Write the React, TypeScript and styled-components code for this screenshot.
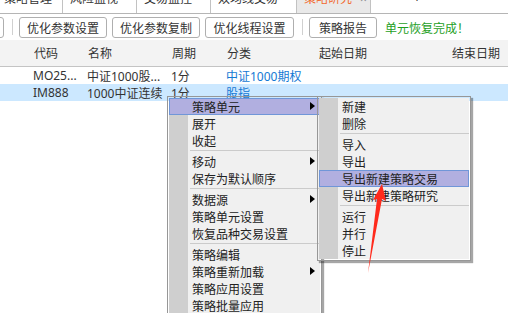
import styled, { createGlobalStyle } from 'styled-components';

const GlobalStyle = createGlobalStyle`
  html, body {
    margin: 0;
    padding: 0;
    background: #fff;
  }
  body {
    font-family: "Noto Sans", "Noto Sans CJK SC", sans-serif;
    font-size: 12px;
    color: #333;
  }
`;

const Page = styled.div`
  position: relative;
  width: 508px;
  height: 313px;
  overflow: hidden;
  background: #fff;
`;

const TabStrip = styled.div`
  display: flex;
  height: 13px;
  border-bottom: 1px solid #b5b5b5;
  overflow: hidden;
`;

const Tab = styled.div<{ $w: number; $active?: boolean }>`
  box-sizing: border-box;
  flex: none;
  width: ${(p) => p.$w}px;
  padding-left: 7px;
  border-right: 1px solid #c2c2c2;
  border-left: ${(p) => (p.$active ? '1px solid #c2c2c2' : 'none')};
  margin-left: ${(p) => (p.$active ? '-1px' : '0')};
  background: ${(p) => (p.$active ? '#e9e9e9' : '#fff')};
  color: ${(p) => (p.$active ? '#f26a2e' : '#333')};
  display: flex;
  line-height: 12px;
  white-space: nowrap;
`;

const TabLabel = styled.span`
  display: block;
  margin-top: -7px;
`;

const TabClose = styled.span`
  display: block;
  margin: -7px 0 0 8px;
  color: #888;
`;

const AddTab = styled.span`
  display: block;
  margin: -9px 0 0 42px;
  font-size: 14px;
  line-height: 14px;
  color: #333;
`;

const Toolbar = styled.div`
  display: flex;
  align-items: center;
  gap: 5px;
  height: 26px;
  background: #fff;
`;

const ToolButton = styled.div<{ $w: number }>`
  box-sizing: border-box;
  flex: none;
  width: ${(p) => p.$w}px;
  height: 21px;
  border: 1px solid #afafaf;
  border-radius: 3px;
  background: #fff;
  display: flex;
  align-items: center;
  justify-content: center;
  font-family: "Noto Sans CJK SC", sans-serif;
  color: #333;
`;

const CutButton = styled(ToolButton)`
  margin-left: -27px;
`;

const ToolSep = styled.div`
  flex: none;
  width: 1px;
  height: 16px;
  margin: 0 1px 0 3px;
  background: #d0d0d0;
`;

const Status = styled.span`
  margin-left: 3px;
  font-family: "Noto Sans CJK SC", sans-serif;
  color: #1ea01e;
`;

const cols = '54px 84px 55px 92px 133px 1fr';

const GridHeader = styled.div`
  display: grid;
  grid-template-columns: ${cols};
  align-items: center;
  height: 26px;
  padding-left: 34px;
  background: #f3f3f3;
  border-bottom: 1px solid #c4c4c4;
`;

const Row = styled.div<{ $selected?: boolean }>`
  display: grid;
  grid-template-columns: ${cols};
  align-items: center;
  height: 17px;
  padding-left: 33px;
  background: ${(p) => (p.$selected ? '#cce8ff' : '#fff')};
`;

const Cell = styled.span<{ $link?: boolean }>`
  white-space: nowrap;
  overflow: hidden;
  color: ${(p) => (p.$link ? '#1479d4' : '#333')};
`;

const Menu = styled.div<{ $left: number; $top: number; $w: number }>`
  position: absolute;
  left: ${(p) => p.$left}px;
  top: ${(p) => p.$top}px;
  width: ${(p) => p.$w}px;
  box-sizing: border-box;
  padding: 1px;
  border: 1px solid #979797;
  background: linear-gradient(90deg, #cfcfcf 0 20px, #f0f0f0 20px);
  background-clip: content-box;
  box-shadow: 2px 2px 1px rgba(0, 0, 0, 0.35);
  font-family: "Noto Sans CJK SC", sans-serif;
  color: #222;
`;

const MenuItem = styled.div<{ $active?: boolean; $sub?: boolean }>`
  position: relative;
  box-sizing: border-box;
  height: 17px;
  line-height: 15px;
  padding-left: 22px;
  border: 1px solid ${(p) => (p.$active ? '#7096d8' : 'transparent')};
  background: ${(p) => (p.$active ? '#b1afe0' : 'transparent')};
  white-space: nowrap;

  &::after {
    content: '';
    display: ${(p) => (p.$sub ? 'block' : 'none')};
    position: absolute;
    right: 4px;
    top: 3px;
    border-left: 5px solid #000;
    border-top: 4px solid transparent;
    border-bottom: 4px solid transparent;
  }
`;

const MenuSep = styled.div`
  margin: 1px 0 2px 21px;
  border-top: 1px solid #cbcbcb;
`;

const Arrow = styled.svg`
  position: absolute;
  left: 0;
  top: 0;
  pointer-events: none;
`;

type Entry = { label: string; sub?: boolean; active?: boolean } | 'sep';

const mainMenu: Entry[] = [
  { label: '策略单元', sub: true, active: true },
  { label: '展开' },
  { label: '收起' },
  'sep',
  { label: '移动', sub: true },
  { label: '保存为默认顺序' },
  'sep',
  { label: '数据源', sub: true },
  { label: '策略单元设置' },
  { label: '恢复品种交易设置' },
  'sep',
  { label: '策略编辑' },
  { label: '策略重新加载', sub: true },
  { label: '策略应用设置' },
  { label: '策略批量应用' },
  { label: '策略批量设置' },
];

const subMenu: Entry[] = [
  { label: '新建' },
  { label: '删除' },
  'sep',
  { label: '导入' },
  { label: '导出' },
  { label: '导出新建策略交易', active: true },
  { label: '导出新建策略研究' },
  'sep',
  { label: '运行' },
  { label: '并行' },
  { label: '停止' },
];

function MenuList({ items }: { items: Entry[] }) {
  return (
    <>
      {items.map((it, i) =>
        it === 'sep' ? (
          <MenuSep key={i} />
        ) : (
          <MenuItem key={i} $active={it.active} $sub={it.sub}>
            {it.label}
          </MenuItem>
        )
      )}
    </>
  );
}

export default function App() {
  return (
    <Page>
      <GlobalStyle />
      <TabStrip>
        <Tab $w={66} style={{ marginLeft: -3 }}>
          <TabLabel>策略管理</TabLabel>
        </Tab>
        <Tab $w={74}>
          <TabLabel>风险监视</TabLabel>
        </Tab>
        <Tab $w={74}>
          <TabLabel>交易监控</TabLabel>
        </Tab>
        <Tab $w={86}>
          <TabLabel>双均线交易</TabLabel>
        </Tab>
        <Tab $w={75} $active>
          <TabLabel>策略研究</TabLabel>
          <TabClose>×</TabClose>
        </Tab>
        <AddTab>+</AddTab>
      </TabStrip>

      <Toolbar>
        <CutButton $w={31} />
        <ToolSep />
        <ToolButton $w={88}>优化参数设置</ToolButton>
        <ToolButton $w={88}>优化参数复制</ToolButton>
        <ToolButton $w={89}>优化线程设置</ToolButton>
        <ToolSep />
        <ToolButton $w={68}>策略报告</ToolButton>
        <Status>单元恢复完成！</Status>
      </Toolbar>

      <GridHeader>
        <Cell>代码</Cell>
        <Cell>名称</Cell>
        <Cell>周期</Cell>
        <Cell>分类</Cell>
        <Cell>起始日期</Cell>
        <Cell>结束日期</Cell>
      </GridHeader>
      <Row>
        <Cell>MO25...</Cell>
        <Cell>中证1000股...</Cell>
        <Cell>1分</Cell>
        <Cell $link>中证1000期权</Cell>
        <Cell />
        <Cell />
      </Row>
      <Row $selected>
        <Cell>IM888</Cell>
        <Cell>1000中证连续</Cell>
        <Cell>1分</Cell>
        <Cell $link>股指</Cell>
        <Cell />
        <Cell />
      </Row>

      <Menu $left={167} $top={96} $w={155}>
        <MenuList items={mainMenu} />
      </Menu>
      <Menu $left={317} $top={96} $w={154}>
        <MenuList items={subMenu} />
      </Menu>

      <Arrow width={508} height={313} viewBox="0 0 508 313">
        <polygon
          points="382,184 386,201 382,199 368,273 377,199 373,200"
          fill="#ff2a1c"
        />
      </Arrow>
    </Page>
  );
}
